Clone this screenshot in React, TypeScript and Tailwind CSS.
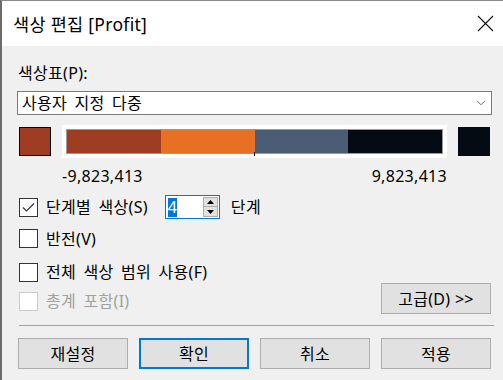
import { ChevronDown } from 'lucide-react';

const FONT = '"Noto Sans", "Noto Sans CJK KR", sans-serif';

const SEGMENTS = ['#9e3d22', '#e87024', '#4a5d74', '#050b12'];

function CheckBox({ checked = false, disabled = false }: { checked?: boolean; disabled?: boolean }) {
  return (
    <div
      className={
        'w-[19px] h-[19px] bg-white border flex items-center justify-center shrink-0 ' +
        (disabled ? 'border-[#cccccc]' : 'border-[#333333]')
      }
    >
      {checked && (
        <svg width="13" height="11" viewBox="0 0 13 11">
          <path d="M1 5.5 L4.5 9 L12 1.5" fill="none" stroke="#333" strokeWidth="1.2" />
        </svg>
      )}
    </div>
  );
}

function Button({ label, primary = false, className = '' }: { label: string; primary?: boolean; className?: string }) {
  return (
    <div
      className={
        'h-[31px] flex items-center justify-center bg-[#e1e1e1] text-black ' +
        (primary ? 'border-2 border-[#0078d7]' : 'border border-[#adadad]') +
        ' ' + className
      }
    >
      {label}
    </div>
  );
}

export default function App() {
  return (
    <div
      className="w-[503px] h-[380px] bg-[#f0f0f0] border-t border-l-2 border-t-[#8c8c8c] border-l-[#6b6b6b] overflow-hidden"
      style={{ fontFamily: FONT }}
    >
      {/* Title bar */}
      <div className="h-[45px] bg-white flex items-center justify-between pl-[11px] pr-[9px]">
        <span className="text-[17.5px] text-black leading-none pt-[2px] tracking-[0.3px]">색상 편집 [Profit]</span>
        <svg width="17" height="17" viewBox="0 0 17 17">
          <path d="M1 1 L16 16 M16 1 L1 16" stroke="#111" strokeWidth="1.1" />
        </svg>
      </div>

      {/* Body */}
      <div className="pl-[15px] pr-[10px] text-[16px] tracking-[0.3px] [word-spacing:3px] text-black">
        <div className="mt-[17px] h-[20px] leading-[20px] pl-[1px]">색상표(P):</div>

        {/* Dropdown */}
        <div className="mt-[8px] h-[24px] w-[475px] bg-white border border-[#7a7a7a] flex items-center justify-between pl-[4px] pr-[3px]">
          <span className="leading-none">사용자 지정 다중</span>
          <ChevronDown size={14} strokeWidth={1.3} className="text-[#444]" />
        </div>

        {/* Colour ramp */}
        <div className="mt-[10px] h-[33px] flex items-center">
          <div className="ml-[2px] w-[32px] h-[29px] bg-[#9e3d22] border border-black" />
          <div className="ml-[11px] w-[385px] h-[33px] bg-white flex items-center justify-center">
            <div className="relative w-[377px] h-[25px] border border-[#9a9a9a] flex">
              {SEGMENTS.map((c) => (
                <div key={c} className="flex-1 h-full" style={{ backgroundColor: c }} />
              ))}
              <div className="absolute left-[187px] top-[22px] w-[1px] h-[4px] bg-black" />
            </div>
          </div>
          <div className="ml-[11px] w-[32px] h-[29px] bg-[#050b12]" />
        </div>

        <div className="mt-[8px] h-[20px] leading-[20px] flex w-[430px] justify-between pl-[45px]">
          <span>-9,823,413</span>
          <span>9,823,413</span>
        </div>

        {/* Options */}
        <div className="mt-[9px] h-[24px] flex items-center ml-[2px]">
          <CheckBox checked />
          <span className="ml-[8px]">단계별 색상(S)</span>
          <div className="ml-[17px] w-[55px] h-[24px] bg-white border border-[#0078d7] flex items-center justify-between pl-[2px] pr-[1px]">
            <span className="bg-[#0078d7] text-white h-[19px] w-[9px] leading-[19px] text-[16px]">4</span>
            <div className="flex flex-col w-[15px] h-[20px] gap-0">
              <div className="h-[10px] bg-[#e1e1e1] border border-[#adadad] flex items-center justify-center">
                <svg width="7" height="4" viewBox="0 0 7 4"><path d="M0 4 L3.5 0 L7 4 Z" fill="#000" /></svg>
              </div>
              <div className="h-[10px] bg-[#e1e1e1] border border-[#adadad] border-t-0 flex items-center justify-center">
                <svg width="7" height="4" viewBox="0 0 7 4"><path d="M0 0 L3.5 4 L7 0 Z" fill="#000" /></svg>
              </div>
            </div>
          </div>
          <span className="ml-[11px]">단계</span>
        </div>

        <div className="mt-[10px] h-[19px] flex items-center ml-[2px]">
          <CheckBox />
          <span className="ml-[8px]">반전(V)</span>
        </div>

        <div className="mt-[14px] h-[20px] flex items-center ml-[2px]">
          <CheckBox />
          <span className="ml-[8px]">전체 색상 범위 사용(F)</span>
        </div>

        <div className="mt-[1px] h-[31px] flex items-end justify-between w-[474px]">
          <div className="flex items-center mb-[1px] ml-[2px]">
            <CheckBox disabled />
            <span className="ml-[8px] text-[#a0a0a0]">총계 포함(I)</span>
          </div>
          <Button label="고급(D) >>" className="w-[110px] [word-spacing:0px]" />
        </div>

        {/* Separator */}
        <div className="mt-[11px] ml-[2px] w-[475px] h-[1px] bg-[#a0a0a0]" />

        {/* Buttons */}
        <div className="mt-[12px] ml-[1px] w-[473px] grid grid-cols-4 gap-[11px]">
          <Button label="재설정" />
          <Button label="확인" primary />
          <Button label="취소" />
          <Button label="적용" />
        </div>
      </div>
    </div>
  );
}
